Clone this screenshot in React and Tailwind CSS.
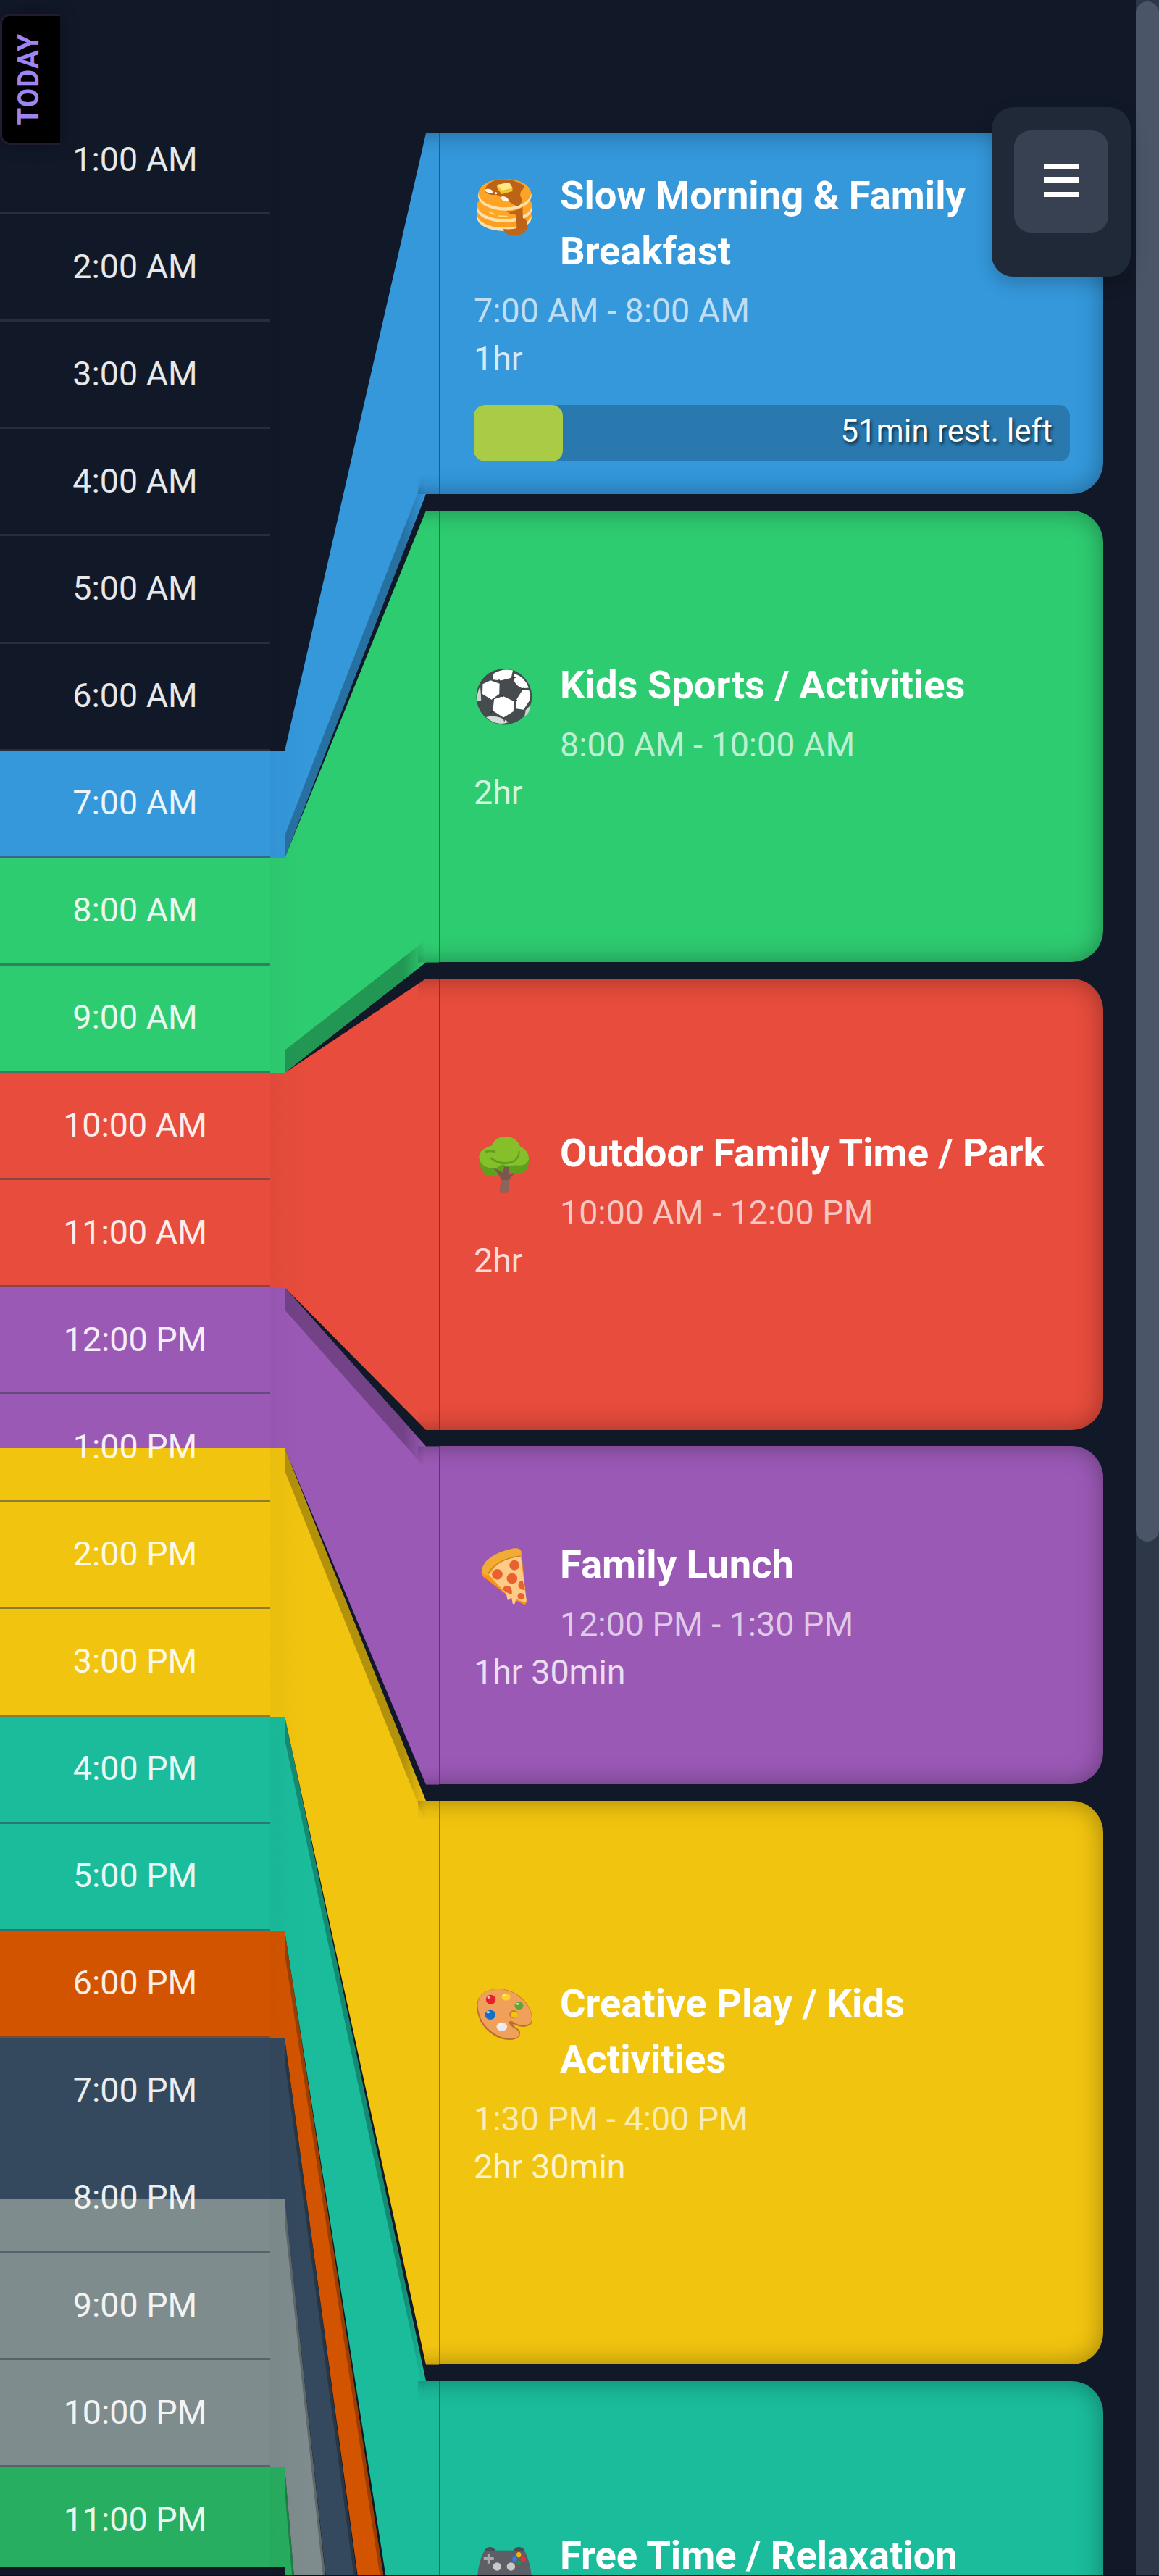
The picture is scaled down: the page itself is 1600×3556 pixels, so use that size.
import clsx from 'clsx';

const ROW = 148.1;

const HOURS = [
  '', '1:00 AM', '2:00 AM', '3:00 AM', '4:00 AM', '5:00 AM', '6:00 AM', '7:00 AM',
  '8:00 AM', '9:00 AM', '10:00 AM', '11:00 AM', '12:00 PM', '1:00 PM', '2:00 PM', '3:00 PM',
  '4:00 PM', '5:00 PM', '6:00 PM', '7:00 PM', '8:00 PM', '9:00 PM', '10:00 PM', '11:00 PM',
];

// rows without a separator under them
const NO_LINE = [0, 19, 23];

// start / end in hours, top / bottom are where the card sits in the right column
const EVENTS = [
  { id: 'breakfast', title: 'Slow Morning & Family Breakfast', time: '7:00 AM - 8:00 AM', duration: '1hr', start: 7, end: 8, top: 184, bottom: 682, fill: '#3498db', icon: PancakeIcon, edge: 'bottom', progress: 15, left: '51min rest. left' },
  { id: 'sports', title: 'Kids Sports / Activities', time: '8:00 AM - 10:00 AM', duration: '2hr', start: 8, end: 10, top: 705, bottom: 1328.5, fill: '#2ecc71', icon: SoccerIcon, edge: 'bottom' },
  { id: 'park', title: 'Outdoor Family Time / Park', time: '10:00 AM - 12:00 PM', duration: '2hr', start: 10, end: 12, top: 1351, bottom: 1974, fill: '#e74c3c', icon: TreeIcon },
  { id: 'lunch', title: 'Family Lunch', time: '12:00 PM - 1:30 PM', duration: '1hr 30min', start: 12, end: 13.5, top: 1996.5, bottom: 2463.5, fill: '#9b59b6', icon: PizzaIcon, edge: 'top' },
  { id: 'creative', title: 'Creative Play / Kids Activities', time: '1:30 PM - 4:00 PM', duration: '2hr 30min', start: 13.5, end: 16, top: 2486, bottom: 3264.5, fill: '#f1c40f', icon: PaletteIcon, edge: 'top' },
  { id: 'free', title: 'Free Time / Relaxation', time: '4:00 PM - 6:00 PM', duration: '2hr', start: 16, end: 18, top: 3287, bottom: 3910, fill: '#1abc9c', icon: GamepadIcon, edge: 'top' },
  { id: 'dinner', start: 18, end: 19, top: 3939, bottom: 4250, fill: '#d35400', edge: 'top' },
  { id: 'bath', start: 19, end: 20.5, top: 4266, bottom: 4820, fill: '#34495e', edge: 'top' },
  { id: 'wind', start: 20.5, end: 23, top: 4838, bottom: 5670, fill: '#7f8c8d', edge: 'top' },
  { id: 'sleep', start: 23, end: 23.925, top: 5690, bottom: 6100, fill: '#27ae60', edge: 'top' },
];

function PancakeIcon() {
  return (
    <svg viewBox="0 0 84 84" className="block h-[84px] w-[84px]">
      <g transform="translate(-14.5 -42) scale(.3333)">
        <ellipse cx="170" cy="298" rx="113" ry="56" fill="#fde0b0" />
        <ellipse cx="170" cy="285" rx="113" ry="55" fill="#fb9f1e" />
        <ellipse cx="171" cy="262" rx="115" ry="56" fill="#fde0b0" />
        <path d="M165 345q50 6 105-18q-3 28-27 39q-30 12-60 1q-14-7-18-22z" fill="#c0661a" />
        <ellipse cx="171" cy="248" rx="114" ry="56" fill="#ffa425" />
        <ellipse cx="172" cy="207" rx="111" ry="62" fill="#fde0b0" />
        <ellipse cx="172" cy="197" rx="109" ry="59" fill="#fda426" />
        <path d="M88 186q10-38 60-46q52-6 98 22q14 8-2 22q-14 14-4 32q8 18-12 36q-22-6-42-24q-22-10-48-24q-38 4-50-18z" fill="#bd6317" />
        <path d="M180 270q30 6 66-16l1 46q20 4 18 36q-22 22-46 8q6-18-2-34q10-18-4-26q-22 2-33-14z" fill="#bd6317" />
        <ellipse cx="107" cy="188" rx="17" ry="8" fill="#fff3e2" transform="rotate(15 107 188)" />
        <ellipse cx="172" cy="221" rx="17" ry="9" fill="#fff3e2" transform="rotate(28 172 221)" />
        <circle cx="135" cy="197" r="5" fill="#fff3e2" />
        <path d="M140 163l50-11l14 22v15l-45 12l-19-25z" fill="#f3c22d" />
        <path d="M140 163l50-11l14 24l-44 9z" fill="#ffe888" />
        <path d="M110 276l18 8M145 291l36 2" stroke="#ffdf7c" strokeWidth="5" strokeLinecap="round" />
      </g>
    </svg>
  );
}

function SoccerIcon() {
  return (
    <svg viewBox="0 0 84 84" className="block h-[84px] w-[84px]">
      <g transform="translate(-304.5 -59) scale(.4464 .3827)">
        <ellipse cx="776" cy="266" rx="86" ry="101" fill="#464b4d" />
        <path d="M742 184q28-22 61-13l-5 27l-33 10l-25-4z" fill="#fff" />
        <path d="M808 182q34 14 44 52l-19 2q-24-10-28-36z" fill="#fff" />
        <path d="M710 220l24-13l28 12l-1 37l-24 20l-28-20z" fill="#fff" />
        <path d="M745 275l28-11l33 18l-1 37l-31 22l-33-25z" fill="#fff" />
        <path d="M832 243l21 0q8 18 1 38l-18 32l-23-4l1-32z" fill="#fff" />
        <path d="M720 340q36-12 70 18q-38 16-70-18z" fill="#d9dbdb" />
        <path d="M702 228q-12 26-9 55l12-4l-1-26z" fill="#cfd2d2" />
        <path d="M858 296q-2 28-19 42l4-24z" fill="#cfd2d2" />
        <path d="M802 202l12-8M829 240l10-6M810 280l6-2M762 258l10 8M764 214l-4-10M742 315l-12 14M775 342l2 12" stroke="#2d3133" strokeWidth="3" />
      </g>
    </svg>
  );
}

function TreeIcon() {
  return (
    <svg viewBox="0 0 84 84" className="block h-[84px] w-[84px]">
      <g transform="translate(-14.5 -664.5) scale(.3333 .5102)">
        <path d="M66 1366q0-22 52-31q14-24 56-24q46 0 62 26q36 10 36 37q0 34-44 37q-28 0-46-9q-30 20-66 16q-32-2-40-20q-10-12-10-32z" fill="#5f9f1e" />
        <path d="M66 1366q0-22 52-31q14-24 56-24q46 0 62 26q36 10 36 34q-12 22-56 16q-24 8-54-2q-34 18-70 6q-24-8-26-25z" fill="#85c02b" />
        <path d="M114 1368q34 18 74 13q42-4 44-32M92 1352q18-6 42 0" stroke="#5f9f1e" strokeWidth="6" fill="none" />
        <path d="M126 1396q22 4 38 12l6-16h20l-2 22q16-4 26-6l-26 20v32q-20 4-36 0l4-36q-12-16-30-28z" fill="#7b564c" />
        <path d="M156 1428h32v32q-20 4-36 0z" fill="#8a655b" />
      </g>
    </svg>
  );
}

function PizzaIcon() {
  return (
    <svg viewBox="0 0 84 84" className="block h-[84px] w-[84px]">
      <g transform="translate(-14.5 -32) scale(.3333)">
        <path d="M78 200q-8 24 20 38l92 72l62 32q10 0 10-14l-20-190z" fill="#fb9413" />
        <path d="M100 212q30-54 138-70l24 184q0 6-8 5q-24-6-34-12l-6 18q-6 8-10-2l-4-22l-10 8q-6 6-8-4l-4-20z" fill="#fecb86" />
        <path d="M76 202q10-66 134-93q34-4 31 22q0 14-16 14q-80 12-108 62q-12 18-28 12q-16-4-13-17z" fill="#f2ab35" />
        <path d="M103 214q34-60 134-73" stroke="#cf8524" strokeWidth="5" fill="none" />
        <circle cx="212" cy="179" r="21" fill="#e8612f" />
        <circle cx="141" cy="217" r="22" fill="#e8612f" />
        <circle cx="202" cy="234" r="22" fill="#e8612f" />
        <path d="M246 242q-20 4-18 22q6 18 28 18z" fill="#e8612f" />
        <path d="M164 280q2-16 20-16q20 2 18 36q-20-4-38-20z" fill="#e8612f" />
        <circle cx="239" cy="308" r="14" fill="#e8612f" />
      </g>
    </svg>
  );
}

function PaletteIcon() {
  return (
    <svg viewBox="0 0 84 84" className="block h-[84px] w-[84px]">
      <g transform="translate(-14.5 -19) scale(.3333)">
        <path d="M56 152q0-56 58-72q60-14 112 22q60 44 60 104q0 26-40 28q-18-2-32-10q-8-2-8-2q4 12 22 22q14 12 4 28q-20 26-80 10q-90-40-96-130z" fill="#b96c33" />
        <path d="M60 146q0-52 56-66q60-12 110 24q58 44 58 98q0 24-38 26q-20-2-34-12q-14-10-22-4q-2 14 22 28q28 14 20 30q-20 22-76 6q-90-40-96-130z" fill="#f0a058" />
        <ellipse cx="209" cy="182" rx="18" ry="17" fill="#c9792f" />
        <ellipse cx="212" cy="184" rx="15" ry="13" fill="#f1c40f" />
        <circle cx="114" cy="121" r="20" fill="#e5222b" />
        <ellipse cx="177" cy="110" rx="18" ry="15" fill="#fbd22a" />
        <ellipse cx="231" cy="146" rx="18" ry="16" fill="#62a33a" />
        <ellipse cx="112" cy="184" rx="22" ry="20" fill="#166fc4" />
        <ellipse cx="160" cy="233" rx="22" ry="18" fill="#e9e9ee" />
        <g fill="#fff" opacity=".7">
          <ellipse cx="106" cy="112" rx="7" ry="5" />
          <ellipse cx="170" cy="104" rx="7" ry="4" />
          <ellipse cx="225" cy="139" rx="7" ry="4" />
          <ellipse cx="103" cy="173" rx="7" ry="5" />
          <ellipse cx="153" cy="225" rx="7" ry="5" />
        </g>
      </g>
    </svg>
  );
}

function GamepadIcon() {
  return (
    <svg viewBox="0 0 84 84" className="block h-[84px] w-[84px]">
      <g transform="translate(-54.5 -301) scale(.6378 .3333)">
        <path d="M108 966q3-18 12-18q8 0 13 14h38q5-14 12-14q10 0 14 18z" fill="#4c4d52" />
        <path d="M107 968q4-6 24-5h44q18-1 22 5q12 50 14 110q-4 40-20 30l-12-44h-54l-12 44q-18 6-20-30q2-64 14-110z" fill="#5e5f66" />
        <path d="M115 977h6v13h8v12h-8v14h-6v-14h-8v-12h8z" fill="#a9a9ac" />
        <ellipse cx="136" cy="1029" rx="9" ry="17" fill="#c9c9cc" />
        <ellipse cx="166" cy="1029" rx="9" ry="17" fill="#c9c9cc" />
        <ellipse cx="183" cy="980" rx="5" ry="11" fill="#fbb400" />
        <ellipse cx="174" cy="998" rx="5" ry="11" fill="#2a7ff0" />
        <ellipse cx="192" cy="998" rx="5" ry="11" fill="#ef3030" />
        <ellipse cx="183" cy="1013" rx="4.5" ry="9" fill="#169b4a" />
      </g>
    </svg>
  );
}

// Joins an hour range on the left to its card on the right
function Funnel({ event }) {
  const y0 = event.start * ROW;
  const y1 = event.end * ROW;
  const { top, bottom, fill, edge, id } = event;
  const shape = `0,${y0} 195,${top} 213,${top} 213,${bottom} 195,${bottom} 0,${y1}`;
  return (
    <g>
      <clipPath id={`clip-${id}`}>
        <polygon points={shape} />
      </clipPath>
      <polygon points={shape} fill={fill} />
      <g clipPath={`url(#clip-${id})`}>
        {edge === 'bottom' && <polygon points={`0,${y1 - 31} 195,${bottom - 31} 195,${bottom} 0,${y1}`} fill="url(#strip)" />}
        {edge === 'top' && <polygon points={`0,${y0} 195,${top} 195,${top + 31} 0,${y0 + 31}`} fill="url(#strip)" />}
        <rect x="184" y={top} width="30" height="28" fill="url(#shadeTop)" />
        <rect x="184" y={bottom - 28} width="30" height="28" fill="url(#shadeBottom)" />
      </g>
    </g>
  );
}

function EventCard({ event }) {
  const Icon = event.icon;
  return (
    <div
      className={clsx('relative flex shrink-0 flex-col justify-center overflow-hidden rounded-r-[44px] border-l-2 border-black/40 pl-[46px] pr-[46px] pt-0.5', event.id !== 'breakfast' && 'mt-[22.5px]')}
      style={{ height: event.bottom - event.top, backgroundColor: event.fill }}
    >
      <div className="pointer-events-none absolute inset-y-0 -left-20 right-0 rounded-r-[44px] shadow-[inset_0_0_34px_rgba(0,0,0,0.34)]" />
      <div>
        <div className="float-left mr-[35px] pt-3">
          <Icon />
        </div>
        <h3 className="mb-[11px] text-[54.3px] font-bold leading-[77px] text-white">{event.title}</h3>
        <p className="text-[46.6px] leading-[66px] text-white/70">{event.time}</p>
        <p className="text-[46.6px] leading-[66px] text-white/80">{event.duration}</p>
      </div>
      {event.left && (
        <div className="relative mt-[31px] flex h-[78px] items-center justify-end overflow-hidden rounded-[15px] bg-black/20 pr-6">
          <div className="absolute inset-y-0 left-0 rounded-[15px] bg-[#a9cb46]" style={{ width: `${event.progress}%` }} />
          <span className="relative -mt-1 text-[43.6px] leading-none text-white [text-shadow:2px_3px_4px_rgba(0,0,0,0.7)]">{event.left}</span>
        </div>
      )}
    </div>
  );
}

export default function App() {
  const cards = EVENTS.filter((e) => e.title);

  return (
    <div className="relative flex h-[3556px] w-[1600px] overflow-hidden bg-[#111827] font-['Roboto',sans-serif]">
      {/* hours */}
      <div className="relative w-[393px] shrink-0">
        <div className="absolute inset-0 flex flex-col pt-[1036.7px]">
          {EVENTS.map((e) => (
            <div key={e.id} className="shrink-0" style={{ height: (e.end - e.start) * ROW, backgroundColor: e.fill }} />
          ))}
        </div>
        <div className="relative flex w-[373px] flex-col">
          {HOURS.map((hour, i) => (
            <div
              key={i}
              className={clsx(
                'flex h-[148.1px] shrink-0 items-center justify-center border-b-[3px] text-[46.6px] text-white/90',
                NO_LINE.includes(i) ? 'border-transparent' : 'border-[#3a4052]/55'
              )}
            >
              {hour}
            </div>
          ))}
        </div>
      </div>

      <svg width="213" height="3556" viewBox="0 0 213 3556" className="block shrink-0">
        <defs>
          <linearGradient id="strip" gradientUnits="userSpaceOnUse" x1="0" x2="195" y1="0" y2="0">
            <stop offset=".84" stopColor="#000" stopOpacity=".26" />
            <stop offset="1" stopColor="#000" stopOpacity="0" />
          </linearGradient>
          <linearGradient id="shadeTop" x1="0" x2="0" y1="0" y2="1">
            <stop offset="0" stopColor="#000" stopOpacity=".17" />
            <stop offset=".5" stopColor="#000" stopOpacity=".05" />
            <stop offset="1" stopColor="#000" stopOpacity="0" />
          </linearGradient>
          <linearGradient id="shadeBottom" x1="0" x2="0" y1="1" y2="0">
            <stop offset="0" stopColor="#000" stopOpacity=".17" />
            <stop offset=".5" stopColor="#000" stopOpacity=".05" />
            <stop offset="1" stopColor="#000" stopOpacity="0" />
          </linearGradient>
        </defs>
        {EVENTS.map((e) => (
          <Funnel key={e.id} event={e} />
        ))}
      </svg>

      {/* cards */}
      <div className="flex w-[917px] shrink-0 flex-col pt-[184px]">
        {cards.map((e) => (
          <EventCard key={e.id} event={e} />
        ))}
      </div>

      {/* scrollbar */}
      <div className="ml-auto w-8 shrink-0 bg-[#2d3748] pt-0.5">
        <div className="h-[2126px] rounded-full bg-[#4a5568]" />
      </div>

      <div className="absolute inset-y-0 left-[373px] w-[52px] bg-gradient-to-r from-black/[0.03] to-transparent" />

      <div className="absolute left-0 top-[19px] flex h-[181px] w-[83px] items-center justify-center rounded-l-[14px] border-y-[3px] border-l-[3px] border-[#a78bfa]/20 bg-black pr-2 shadow-[0_0_24px_rgba(0,0,0,0.3)]">
        <span className="rotate-180 scale-x-[1.07] text-[38.4px] font-bold leading-none tracking-[1px] text-[#9f84f4] [writing-mode:vertical-rl]">TODAY</span>
      </div>

      <div className="absolute left-[1369px] top-[148px] h-[234px] w-[192px] rounded-[30px] bg-[#1f2937] px-[31px] pt-8 shadow-[0_10px_24px_rgba(0,0,0,0.2)]">
        <button type="button" aria-label="Menu" className="flex h-[141px] w-[130px] flex-col items-center justify-center gap-[12.5px] rounded-[23px] bg-[#374151] pb-1">
          <span className="h-[7px] w-12 bg-white" />
          <span className="h-[7px] w-12 bg-white" />
          <span className="h-[7px] w-12 bg-white" />
        </button>
      </div>

      <div className="absolute inset-x-0 bottom-0 h-0.5 bg-[#0a0f1a]" />
    </div>
  );
}
